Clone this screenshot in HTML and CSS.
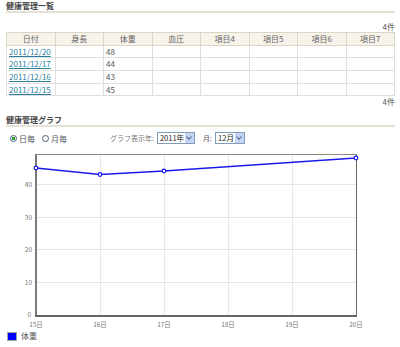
FILE: index.html
```html
<!DOCTYPE html>
<html lang="ja">
<head>
    <meta charset="UTF-8">
    <title>健康管理</title>
    <link rel="stylesheet" href="styles.css">
</head>
<body>
    <div class="container">
        <h2 class="section-title">健康管理一覧</h2>
        <div class="count count-top">4件</div>
        <table class="health-table">
            <thead>
                <tr>
                    <th>日付</th>
                    <th>身長</th>
                    <th>体重</th>
                    <th>血圧</th>
                    <th>項目4</th>
                    <th>項目5</th>
                    <th>項目6</th>
                    <th>項目7</th>
                </tr>
            </thead>
            <tbody>
                <tr><td><a href="#">2011/12/20</a></td><td></td><td>48</td><td></td><td></td><td></td><td></td><td></td></tr>
                <tr><td><a href="#">2011/12/17</a></td><td></td><td>44</td><td></td><td></td><td></td><td></td><td></td></tr>
                <tr><td><a href="#">2011/12/16</a></td><td></td><td>43</td><td></td><td></td><td></td><td></td><td></td></tr>
                <tr><td><a href="#">2011/12/15</a></td><td></td><td>45</td><td></td><td></td><td></td><td></td><td></td></tr>
            </tbody>
        </table>
        <div class="count count-bottom">4件</div>

        <h2 class="section-title graph-title">健康管理グラフ</h2>
        <div class="graph-controls">
            <label class="radio"><input type="radio" name="mode" checked>日毎</label>
            <label class="radio"><input type="radio" name="mode">月毎</label>
            <span class="year-label">グラフ表示年:</span>
            <span class="select"><span class="select-value">2011年</span><span class="select-arrow"></span></span>
            <span class="month-label">月:</span>
            <span class="select"><span class="select-value">12月</span><span class="select-arrow"></span></span>
        </div>
    </div>

    <svg class="chart" width="400" height="180" viewBox="0 150 400 180">
        <g stroke="#e6e6e6" stroke-width="1">
            <line x1="36" y1="183.5" x2="356" y2="183.5"/>
            <line x1="36" y1="216.5" x2="356" y2="216.5"/>
            <line x1="36" y1="248.5" x2="356" y2="248.5"/>
            <line x1="36" y1="281.5" x2="356" y2="281.5"/>
            <line x1="100.5" y1="153" x2="100.5" y2="314"/>
            <line x1="164.5" y1="153" x2="164.5" y2="314"/>
            <line x1="228.5" y1="153" x2="228.5" y2="314"/>
            <line x1="292.5" y1="153" x2="292.5" y2="314"/>
        </g>
        <line x1="36" y1="153.5" x2="356" y2="153.5" stroke="#8a8a8a" stroke-width="1"/>
        <line x1="356.5" y1="153" x2="356.5" y2="315" stroke="#666" stroke-width="1"/>
        <line x1="36" y1="153" x2="36" y2="316" stroke="#7a7a7a" stroke-width="2"/>
        <line x1="35" y1="315" x2="357" y2="315" stroke="#666" stroke-width="2"/>

        <polyline points="36,167 100,173.5 164,170 356,157" fill="none" stroke="#1a1aee" stroke-width="1.6"/>
        <g fill="#fff" stroke="#1a1aee" stroke-width="1.2">
            <circle cx="36" cy="167" r="1.8"/>
            <circle cx="100" cy="173.5" r="1.8"/>
            <circle cx="164" cy="170" r="1.8"/>
            <circle cx="356" cy="157" r="1.8"/>
        </g>

        <g class="axis-label" text-anchor="end">
            <text x="32" y="186">40</text>
            <text x="32" y="219">30</text>
            <text x="32" y="251">20</text>
            <text x="32" y="284">10</text>
            <text x="31" y="316">0</text>
        </g>
        <g class="axis-label" text-anchor="middle">
            <text x="36" y="326">15日</text>
            <text x="100" y="326">16日</text>
            <text x="164" y="326">17日</text>
            <text x="228" y="326">18日</text>
            <text x="292" y="326">19日</text>
            <text x="356" y="326">20日</text>
        </g>
    </svg>

    <div class="legend">
        <span class="legend-box"></span>体重
    </div>
</body>
</html>
```

FILE: styles.css
```css
:root {
    --text-color: #555;
    --line-color: #e6e1d6;
    --header-bg: #f6f3ea;
    --link-color: #2a7f9e;
}

body {
    margin: 0;
    padding: 0;
    font-family: "Noto Sans CJK JP", "Noto Sans", sans-serif;
    font-size: 8px;
    color: var(--text-color);
    background: #fff;
}

.container {
    padding: 2px 5px 0 6px;
}

.section-title {
    margin: 0;
    font-size: 8px;
    font-weight: bold;
    color: #444;
    line-height: 8px;
    padding-bottom: 1px;
    border-bottom: 2px solid var(--line-color);
}

.count {
    text-align: right;
    line-height: 9px;
}

.count-top {
    margin-top: 9px;
    margin-bottom: 1px;
}

.count-bottom {
    margin-top: 1px;
}

.health-table {
    width: 100%;
    border-collapse: collapse;
    table-layout: fixed;
    border: 1px solid #ddd;
}

.health-table th,
.health-table td {
    border: 1px solid #dedede;
    height: 11.7px;
    padding: 0 2px;
    line-height: 10px;
    font-size: 8px;
}

.health-table th {
    background: var(--header-bg);
    border-color: #dcd4c4;
    font-weight: normal;
    color: #666;
}

.health-table td a {
    color: var(--link-color);
    text-decoration: underline;
}

.graph-title {
    margin-top: 10px;
}

.graph-controls {
    display: flex;
    align-items: center;
    height: 12px;
    margin-top: 5px;
    padding-left: 4px;
}

.radio {
    display: inline-flex;
    align-items: center;
    gap: 2px;
    margin-right: 7px;
}

.radio input {
    appearance: none;
    margin: 0;
    width: 7px;
    height: 7px;
    border: 1px solid #4a5a78;
    border-radius: 50%;
    background: #fff;
}

.radio input:checked {
    background: radial-gradient(circle, #2ba22b 0 1.6px, #fff 2px);
}

.year-label {
    margin-left: 36px;
    margin-right: 3px;
    font-size: 7px;
    color: #777;
}

.month-label {
    margin-left: 8px;
    margin-right: 3px;
    font-size: 7px;
}

.select {
    display: inline-flex;
    align-items: center;
    height: 10px;
    border: 1px solid #7f9db9;
    background: #fff;
    color: #222;
}

.select-value {
    padding: 0 1px 0 2px;
    line-height: 10px;
    font-size: 7.5px;
}

.select-arrow {
    width: 9px;
    height: 10px;
    background: #c5d3f4;
    position: relative;
}

.select-arrow::after {
    content: "";
    position: absolute;
    left: 2px;
    top: 2px;
    width: 3px;
    height: 3px;
    border-right: 1px solid #4d6185;
    border-bottom: 1px solid #4d6185;
    transform: rotate(45deg);
}

.chart {
    display: block;
    margin-top: 7px;
}

.axis-label {
    font-family: "Noto Sans CJK JP", "Noto Sans", sans-serif;
    font-size: 6.5px;
    fill: #777;
}

.legend {
    display: flex;
    align-items: center;
    gap: 4px;
    padding-left: 7px;
    line-height: 10px;
    color: #555;
}

.legend-box {
    width: 8px;
    height: 7px;
    background: #0000ff;
    border: 1px solid #9aa;
}
```
